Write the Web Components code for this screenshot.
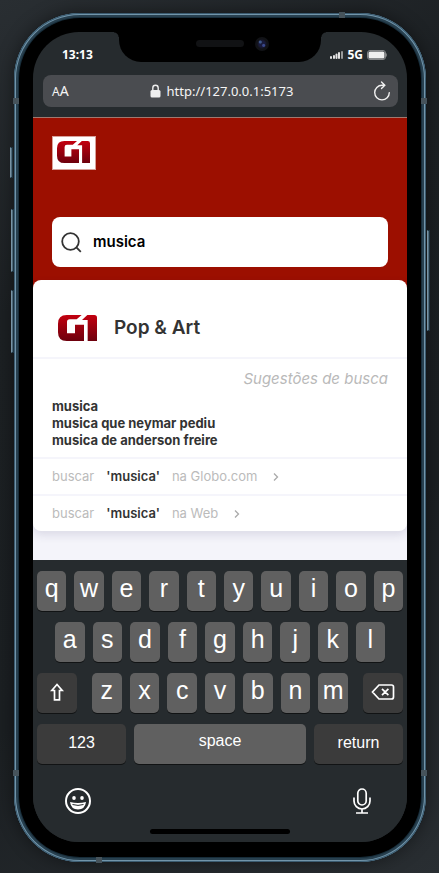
<!DOCTYPE html>
<html lang="pt-BR">
<head>
<meta charset="utf-8">
<meta name="viewport" content="width=device-width, initial-scale=1">
<title>G1 - Busca</title>
<style>
body { margin: 0; min-height: 100vh; background: linear-gradient(150deg, #292e32, #1c2023 28%, #1b1f22 65%, #292e32); font-family: Inter, "Liberation Sans", sans-serif; font-optical-sizing: none; display: flow-root; }
</style>
</head>
<body>
<phone-frame>
  <status-bar slot="top"></status-bar>
  <address-bar slot="top" url="http://127.0.0.1:5173"></address-bar>
  <site-page>
    <site-header></site-header>
    <suggestion-card></suggestion-card>
  </site-page>
  <soft-keyboard slot="bottom"></soft-keyboard>
</phone-frame>
<script>
const define = (name, html, setup) => customElements.define(name, class extends HTMLElement {
  constructor() {
    super();
    const t = document.createElement('template');
    t.innerHTML = '<style>*{box-sizing:border-box}:host{display:block;box-sizing:border-box}button{appearance:none;border:0;padding:0;background:none;color:inherit;font:inherit;cursor:pointer}svg{display:block;flex:none}</style>' + html;
    this.attachShadow({ mode: 'open' }).append(t.content.cloneNode(true));
  }
  connectedCallback() { if (setup) setup(this, this.shadowRoot); }
});

define('g1-logo', `
<style>:host{width:39px;flex:none}svg{width:100%;height:auto}</style>
<svg viewBox="0 0 117 78" role="img" aria-label="G1">
  <defs><linearGradient id="g" x1="0" y1="0" x2="0" y2="78" gradientUnits="userSpaceOnUse"><stop stop-color="#c3000f"/><stop offset="1" stop-color="#6d000d"/></linearGradient></defs>
  <path fill="url(#g)" d="M26 0H71L56 13H35Q27 13 27 21V55H51V29H78V78H26Q0 78 0 52V26Q0 0 26 0Z"/>
  <path fill="url(#g)" d="M88 0H109Q117 0 117 8V78H89V15H72Z"/>
</svg>`);

define('phone-frame', `
<style>
:host{position:relative;margin:13px 13px 11px 14px;padding:19px 19px 20px;border-radius:66px;background:#000;
 box-shadow:inset 0 0 0 1px #3b5b70,inset 0 0 0 2px #7295aa,inset 0 0 0 4px #28404f,inset 0 0 0 5px #172c39,0 0 18px rgba(0,0,0,.45)}
main{border-radius:46px;overflow:hidden;background:#262b2e}
.notch{position:absolute;top:19px;left:50%;transform:translateX(-50%);width:202px;height:30px;background:#000;border-radius:0 0 22px 22px}
.notch::before,.notch::after{content:"";position:absolute;top:0;width:5px;height:5px}
.notch::before{right:100%;background:radial-gradient(circle at 0 100%,transparent 4px,#000 5px)}
.notch::after{left:100%;background:radial-gradient(circle at 100% 100%,transparent 4px,#000 5px)}
.speaker{position:absolute;left:77px;top:8px;width:48px;height:7px;border-radius:4px;background:#111214}
.camera{position:absolute;left:136px;top:5px;width:14px;height:14px;border-radius:50%;background:radial-gradient(circle at 38% 36%,#3c5688 0 1px,transparent 2px),radial-gradient(circle at 62% 60%,#39488c 0 1px,transparent 2px),radial-gradient(circle,#191a3a 0 3px,#111216 5px)}
.side,.band{position:absolute}
.side{width:3px;background:#4f6a7b;border:1px solid #1d323e;border-left-color:#7894a5}
.mute{left:-4px;top:134px;height:31px}
.up{left:-3px;top:196px;height:63px}
.down{left:-3px;top:277px;height:63px}
.power{right:-4px;top:217px;height:101px}
.band{width:6px;height:6px;background:#46535b}
.b1{left:-1px;top:85px}.b2{right:-1px;top:85px}.b3{left:-1px;bottom:86px}.b4{right:-1px;bottom:86px}
.b5{right:81px;top:-1px}.b6{left:82px;bottom:-1px}
</style>
<i class="side mute"></i><i class="side up"></i><i class="side down"></i><i class="side power"></i>
<i class="band b1"></i><i class="band b2"></i><i class="band b3"></i><i class="band b4"></i><i class="band b5"></i><i class="band b6"></i>
<main><slot name="top"></slot><slot></slot><slot name="bottom"></slot></main>
<div class="notch"><i class="speaker"></i><i class="camera"></i></div>`);

define('status-bar', `
<style>
:host{display:flex;justify-content:space-between;padding:15px 20px 12px 29px;color:#fff;font:700 12px/16px "Noto Sans",sans-serif}
div{display:flex;align-items:center;gap:4px}
</style>
<time>13:13</time>
<div>
 <svg width="13" height="10" viewBox="0 0 13 10" fill="#e4e4e4"><rect y="6" width="2" height="3" rx="1"/><rect x="3" y="5" width="2" height="4" rx="1"/><rect x="5.500" y="3.500" width="2" height="5.500" rx="1"/><rect x="8" y="2" width="2" height="7" rx="1"/><rect x="11" y="1" width="2" height="8" rx="1" opacity=".6"/></svg>
 <span>5G</span>
 <svg width="20" height="10" viewBox="0 0 20 10"><rect x=".5" y=".5" width="18" height="9" rx="2.500" fill="none" stroke="#858789"/><rect x="1.500" y="1.500" width="16" height="7" rx="1.500" fill="#f0f0f0"/><path d="M19.200 3.500v3" fill="none" stroke="#999"/></svg>
</div>`);

define('address-bar', `
<style>
:host{padding:0 9px 10px 10px;color:#f5f5f5;font-family:"Noto Sans",sans-serif}
.bar{display:grid;grid-template-columns:1fr auto 1fr;align-items:center;height:32px;padding:0 7px 0 9px;border-radius:8px;background:#4a4c50}
.aa{justify-self:start;font-size:14px;line-height:20px}.aa small{font-size:12px}
a{display:flex;align-items:center;gap:6px;color:inherit;text-decoration:none;font-size:13px;line-height:20px}
.reload{justify-self:end}
</style>
<div class="bar">
 <button class="aa" aria-label="Tamanho do texto"><small>A</small>A</button>
 <a href="#"><svg width="11" height="14" viewBox="0 0 11 14"><rect x=".5" y="6" width="10" height="7.500" rx="1.500" fill="#eee"/><path d="M2.800 7V4a2.700 2.700 0 0 1 5.400 0v3" fill="none" stroke="#eee" stroke-width="1.400"/></svg><span></span></a>
 <button class="reload" aria-label="Recarregar"><svg width="18" height="20" viewBox="0 0 18 20" fill="none" stroke="#f0f0f0" stroke-width="1.400" stroke-linecap="round"><path d="M11.500 4.300H9A7.300 7.300 0 1 0 16.300 11.600M8.500 1 11.800 4.300 8.500 7.600"/></svg></button>
</div>`, (el, root) => { root.querySelector('span').textContent = el.getAttribute('url'); });

define('site-page', `
<style>:host{background:#f4f4fa;border-top:1px solid #a1796f;padding-bottom:29px}</style><slot></slot>`);

define('site-header', `
<style>
:host{background:#9c0f00;padding:18px 19px 24px}
a{display:flex;width:44px;height:34px;padding:4px 4px 6px 4px;background:#fff;border:1px solid #d8a19b}
g1-logo{width:33px}
label{display:flex;align-items:center;gap:11px;margin-top:47px;height:50px;padding:0 9px;border-radius:8px;background:#fff}
input{flex:1;min-width:0;border:0;outline:0;padding:0;background:none;color:#000;font:600 15px/20px Inter,sans-serif;font-optical-sizing:none}
</style>
<a href="#" aria-label="Início"><g1-logo></g1-logo></a>
<label aria-label="Buscar"><svg width="21" height="21" viewBox="0 0 21 21" fill="none" stroke="#333" stroke-width="1.800"><circle cx="9.500" cy="9.500" r="8.300"/><path d="m15.400 15.400 4.400 4.400"/></svg>
<input type="text" value="musica"></label>`);

define('search-link', `
<style>
a{display:flex;align-items:center;gap:12px;height:35px;padding:0 19px;color:#bbb;text-decoration:none;font-size:13px;line-height:17px}
b{font-weight:600;color:#333}
svg{margin-left:4px}
</style>
<a href="#"><span>buscar</span><b>'musica'</b><span><slot></slot></span><svg width="6" height="10" viewBox="0 0 6 10" fill="none" stroke="#aaa" stroke-width="1.300"><path d="m1 1.500 3.500 3.500L1 8.500"/></svg></a>`);

define('suggestion-card', `
<style>
:host{position:relative;margin-top:-11px;border-radius:8px;background:#fff;box-shadow:0 4px 10px rgba(40,30,90,.12);color:#333}
header{display:flex;align-items:center;gap:17px;padding:33px 19px 15px 25px}
h1{margin:0;font-size:19px;line-height:29px;font-weight:600}
section,search-link{border-top:2px solid #f5f5fb}
section{padding:10px 19px 8px}
p{margin:0 0 9px;text-align:right;color:#b9b9b9;font-size:15px;line-height:20px;font-style:italic}
ul{margin:0;padding:0;list-style:none;font-size:13px;line-height:17px;font-weight:700}
a{color:inherit;text-decoration:none}
</style>
<header><g1-logo></g1-logo><h1>Pop &amp; Art</h1></header>
<section><p>Sugestões de busca</p>
<ul><li><a href="#">musica</a></li><li><a href="#">musica que neymar pediu</a></li><li><a href="#">musica de anderson freire</a></li></ul></section>
<search-link>na Globo.com</search-link><search-link>na Web</search-link>`);

define('soft-key', `
<style>
:host{flex:1;min-width:0;display:flex;color:#fff;font-family:"Liberation Sans",Arial,sans-serif}
button{width:100%;height:40px;padding:0 0 6px;display:flex;align-items:center;justify-content:center;border-radius:5px;background:#606060;box-shadow:0 1px 0 #111314;font-size:25px;line-height:32px}
:host([kind~=word]) button{font-size:16px}
:host([kind~=dark]) button{background:#3b3b3b;padding-bottom:2px}
</style><button><slot></slot></button>`);

define('soft-keyboard', `
<style>
:host{padding:11px 4px 8px;background:#262b2e;color:#fff}
.keys{display:grid;gap:11px}
.row{display:flex;gap:8px}
.row:nth-child(2){padding:0 18px}
.side{flex:0 0 40px}.side:first-child{margin-right:7px}.side:last-child{margin-left:7px}
.wide{flex:0 0 89px}
.tools{display:flex;justify-content:space-between;padding:24px 32px 15px 28px}
.home{width:140px;height:5px;margin:0 auto;border-radius:3px;background:#000}
</style>
<div class="keys"></div>
<div class="tools">
 <button aria-label="Emoji"><svg width="26" height="26" viewBox="0 0 26 26"><circle cx="13" cy="13" r="12" fill="none" stroke="#fff" stroke-width="2"/><ellipse cx="9" cy="10" rx="1.800" ry="2" fill="#fff"/><ellipse cx="17" cy="10" rx="1.800" ry="2" fill="#fff"/><path d="M5 14Q13 16 21 14Q20 21.500 13 21.500T5 14Z" fill="#fff"/><path d="M7.500 16.500Q13 18.300 18.500 16.500" fill="none" stroke="#262b2e" stroke-width="1"/></svg></button>
 <button aria-label="Ditado"><svg width="18" height="26" viewBox="0 0 18 26" fill="none" stroke="#fff" stroke-width="1.700"><rect x="4.800" y="1" width="8.400" height="16" rx="4.200"/><path d="M1 9.500V13a8 8 0 0 0 16 0V9.500M9 21v4M3 25h12"/></svg></button>
</div>
<div class="home"></div>`, (el, root) => {
  const letters = s => [...s].map(c => `<soft-key>${c}</soft-key>`).join('');
  const shift = '<svg width="14" height="18" viewBox="0 0 14 18" fill="none" stroke="#fff" stroke-width="1.700" role="img" aria-label="Shift"><path d="M7 1.500 1.800 7.500H4.500V16.800H9.500V7.500h2.700z"/></svg>';
  const del = '<svg width="24" height="16" viewBox="0 0 24 16" fill="none" stroke="#fff" stroke-width="1.700" role="img" aria-label="Apagar"><path d="M8 1H20.500Q22.500 1 22.500 3V13Q22.500 15 20.500 15H8L1.500 8zM11 4.800l6.400 6.400M17.400 4.800 11 11.200"/></svg>';
  root.querySelector('.keys').innerHTML =
    `<div class="row">${letters('qwertyuiop')}</div>
     <div class="row">${letters('asdfghjkl')}</div>
     <div class="row"><soft-key kind="dark" class="side">${shift}</soft-key>${letters('zxcvbnm')}<soft-key kind="dark" class="side">${del}</soft-key></div>
     <div class="row"><soft-key kind="dark word" class="wide">123</soft-key><soft-key kind="word">space</soft-key><soft-key kind="dark word" class="wide">return</soft-key></div>`;
});
</script>
</body>
</html>
